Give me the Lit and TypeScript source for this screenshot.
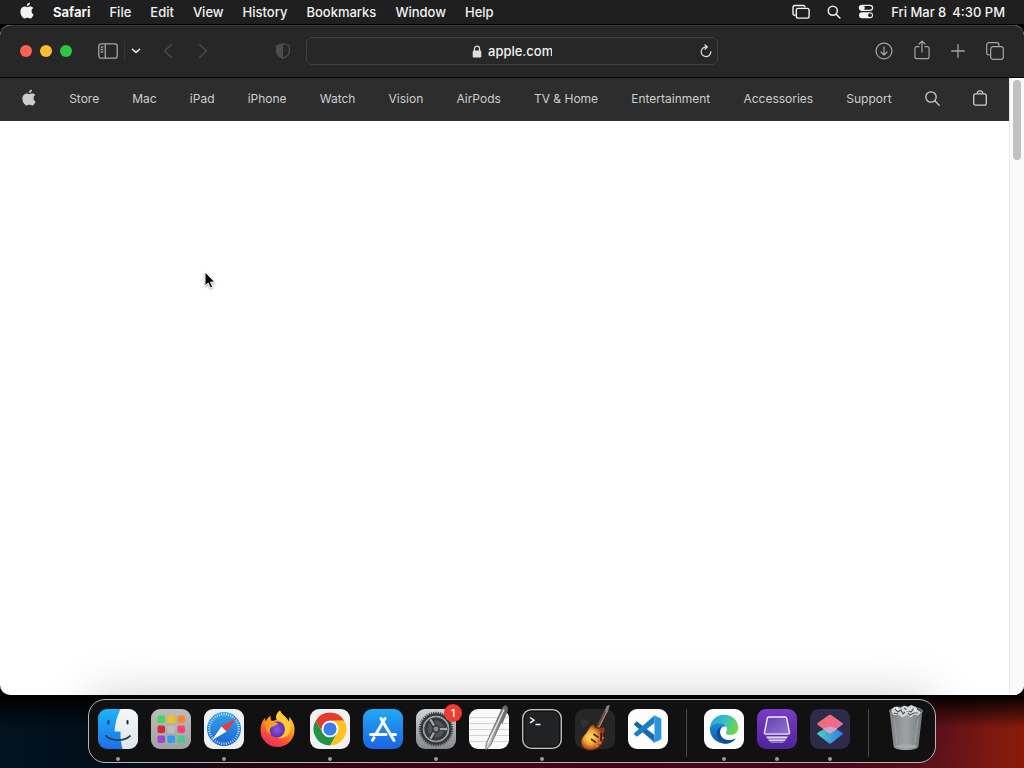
import { LitElement, html, css, svg, nothing, TemplateResult } from "lit";
import { customElement } from "lit/decorators.js";

const appleMark = html`
  <svg class="apple" viewBox="0 0 14 17" width="14" height="17" fill="currentColor" aria-hidden="true">
    <path d="M11.6 9c0-1.6 1.1-2.5 1.7-2.9C12.4 4.8 11.1 4.5 10.2 4.5 9 4.4 8 5.2 7.3 5.2 6.7 5.2 5.7 4.5 4.6 4.5 2.3 4.6.4 6.4.4 9.6c0 3.3 2.4 6.9 4.1 6.9 1 0 1.5-.7 2.8-.7s1.7.7 2.8.7c1.6 0 3-2.6 3.5-4.1C12.3 11.9 11.6 10.7 11.6 9z"/>
    <path d="M9.9.4c.1 1-.3 1.9-.8 2.6-.6.7-1.4 1.1-2.2 1.1-.1-.9.3-1.9.9-2.5C8.3 1 9.2.5 9.9.4z"/>
  </svg>`;

@customElement("menu-bar")
class MenuBar extends LitElement {
  menus = ["File", "Edit", "View", "History", "Bookmarks", "Window", "Help"];

  render() {
    return html`
      <nav class="menus">
        <button class="logo" aria-label="Apple menu">${appleMark}</button>
        <button class="active">Safari</button>
        ${this.menus.map(name => html`<button>${name}</button>`)}
      </nav>
      <div class="status">
        <button aria-label="Stage Manager">
          <svg width="18" height="16" viewBox="0 0 18 16" fill="none" stroke="currentColor" stroke-width="1.4">
            <path d="M3.5 11.3H2.7A1.7 1.7 0 0 1 1 9.6V3.2a1.7 1.7 0 0 1 1.7-1.7h8.6A1.7 1.7 0 0 1 13 3.2"/>
            <rect x="4.3" y="4.4" width="12.8" height="9.7" rx="1.8"/>
          </svg>
        </button>
        <button aria-label="Spotlight">
          <svg width="14" height="14" viewBox="0 0 14 14" fill="none" stroke="currentColor" stroke-width="1.5" stroke-linecap="round">
            <circle cx="5.8" cy="5.8" r="4.5"/><path d="M9.2 9.2l3.7 3.8"/>
          </svg>
        </button>
        <button aria-label="Control Center">
          <svg width="16" height="15" viewBox="0 0 16 15" fill="none" stroke="currentColor" stroke-width="1.3">
            <rect x="1.4" y="1.3" width="13.2" height="5" rx="2.5"/>
            <circle cx="4.1" cy="3.8" r="2" fill="currentColor"/>
            <rect x="1" y="8.2" width="14" height="6" rx="3" fill="currentColor" stroke="none"/>
            <circle cx="12" cy="11.2" r="1.9" fill="#1f1f1f" stroke="none"/>
          </svg>
        </button>
        <time><span>Fri Mar 8</span><span>4:30 PM</span></time>
      </div>
    `;
  }

  static styles = css`
    :host {
      display: flex;
      justify-content: space-between;
      align-items: center;
      height: 24px;
      box-sizing: border-box;
      padding: 0 19px 0 20px;
      background: #1f1f1f;
      color: #f2f2f2;
      font: 500 13px/22px Inter, sans-serif;
      white-space: nowrap;
    }
    .menus {
      display: flex;
      align-items: center;
      gap: 19px;
      padding-bottom: 1px;
    }
    .status {
      display: flex;
      align-items: center;
      gap: 17px;
      padding-bottom: 1px;
    }
    button {
      display: flex;
      align-items: center;
      padding: 0;
      border: 0;
      background: none;
      color: inherit;
      font: inherit;
    }
    .logo {
      padding-bottom: 2px;
    }
    .active {
      font-weight: 700;
    }
    time {
      display: flex;
      gap: 6px;
    }
  `;
}

@customElement("safari-window")
class SafariWindow extends LitElement {
  links = [
    "Store", "Mac", "iPad", "iPhone", "Watch", "Vision", "AirPods",
    "TV & Home", "Entertainment", "Accessories", "Support",
  ];

  renderToolbar() {
    return html`
      <header class="toolbar">
        <div class="side">
          <div class="lights">
            <button class="light close" aria-label="Close"></button>
            <button class="light minimize" aria-label="Minimize"></button>
            <button class="light zoom" aria-label="Zoom"></button>
          </div>
          <div class="sidebar">
            <button aria-label="Sidebar">
              <svg width="20" height="16" viewBox="0 0 20 16" fill="none" stroke="currentColor" stroke-width="1.3">
                <rect x=".8" y=".8" width="18.4" height="14.4" rx="2.2"/>
                <path d="M7.3 1v14M2.8 4h2.4M2.8 6.5h2.4M2.8 9h2.4"/>
              </svg>
            </button>
            <span class="rule"></span>
            <button class="bright" aria-label="Tab groups">
              <svg width="10" height="6" viewBox="0 0 10 6" fill="none" stroke="currentColor" stroke-width="1.7" stroke-linecap="round" stroke-linejoin="round">
                <path d="M1.5 1.3L5 4.4l3.5-3.1"/>
              </svg>
            </button>
          </div>
          <div class="history">
            <button aria-label="Back" disabled>
              <svg width="10" height="16" viewBox="0 0 10 16" fill="none" stroke="currentColor" stroke-width="1.4" stroke-linecap="round" stroke-linejoin="round"><path d="M8.5 1.5L1.5 8l7 6.5"/></svg>
            </button>
            <button aria-label="Forward" disabled>
              <svg width="10" height="16" viewBox="0 0 10 16" fill="none" stroke="currentColor" stroke-width="1.4" stroke-linecap="round" stroke-linejoin="round"><path d="M1.5 1.5l7 6.5-7 6.5"/></svg>
            </button>
          </div>
          <button class="shield" aria-label="Privacy report" disabled>
            <svg width="14" height="16" viewBox="0 0 14 16">
              <path d="M7 .7l5.6 1.7c.4.1.7.5.7.9v5.2c0 3.2-3 5.4-6.3 6.8C3.7 13.9.7 11.7.7 8.5V3.3c0-.4.3-.8.7-.9z" fill="none" stroke="currentColor" stroke-width="1.3"/>
              <path d="M7 .7L1.4 2.4c-.4.1-.7.5-.7.9v5.2c0 3.2 3 5.4 6.3 6.8z" fill="currentColor"/>
            </svg>
          </button>
        </div>
        <div class="address">
          <svg width="10" height="13" viewBox="0 0 10 13" aria-hidden="true">
            <rect x=".7" y="5.5" width="8.6" height="7" rx="1.2" fill="currentColor"/>
            <path d="M2.5 6V3.7a2.5 2.5 0 0 1 5 0V6" fill="none" stroke="currentColor" stroke-width="1.3"/>
          </svg>
          <input type="text" aria-label="Address" value="apple.com" />
          <button class="reload" aria-label="Reload">
            <svg width="12" height="14" viewBox="0 0 12 14" fill="none" stroke="currentColor" stroke-width="1.2" stroke-linecap="round" stroke-linejoin="round">
              <path d="M6.8 3A4.8 4.8 0 1 0 10.8 7.700M5 .8l2.300 2.200L5 5.200"/>
            </svg>
          </button>
        </div>
        <div class="side end">
          <button aria-label="Downloads">
            <svg width="18" height="18" viewBox="0 0 18 18" fill="none" stroke="currentColor" stroke-width="1.2" stroke-linecap="round" stroke-linejoin="round">
              <circle cx="9" cy="9" r="7.9"/><path d="M9 4.8v8M6 10l3 3 3-3"/>
            </svg>
          </button>
          <button class="share" aria-label="Share">
            <svg width="16" height="20" viewBox="0 0 16 20" fill="none" stroke="currentColor" stroke-width="1.2" stroke-linecap="round" stroke-linejoin="round">
              <path d="M5 6.6H2.8A1.9 1.9 0 0 0 .9 8.500v8.200a1.900 1.900 0 0 0 1.900 1.900h10.400a1.900 1.900 0 0 0 1.900-1.900V8.500a1.900 1.900 0 0 0-1.900-1.900H11M8 12V1.300M5 4l3-2.900L11 4"/>
            </svg>
          </button>
          <button aria-label="New tab">
            <svg width="14" height="14" viewBox="0 0 14 14" fill="none" stroke="currentColor" stroke-width="1.3" stroke-linecap="round"><path d="M7 .7v12.6M.7 7h12.6"/></svg>
          </button>
          <button aria-label="Tab overview">
            <svg width="18" height="18" viewBox="0 0 18 18" fill="none" stroke="currentColor" stroke-width="1.2">
              <path d="M4.6 13H2.9A2.2 2.2 0 0 1 .7 10.8V2.9A2.2 2.2 0 0 1 2.9.7h7.9A2.2 2.2 0 0 1 13 2.9v1.7"/>
              <rect x="4.7" y="4.7" width="12.6" height="12.6" rx="2.2"/>
            </svg>
          </button>
        </div>
      </header>
    `;
  }

  render() {
    return html`
      ${this.renderToolbar()}
      <div class="viewport">
        <div class="page">
          <nav>
            <a class="logo" href="#apple" aria-label="Apple">${appleMark}</a>
            ${this.links.map(name => html`<a href="#${name}">${name}</a>`)}
            <a href="#search" aria-label="Search">
              <svg width="15" height="15" viewBox="0 0 15 15" fill="none" stroke="currentColor" stroke-width="1.3" stroke-linecap="round">
                <circle cx="6" cy="6" r="5.2"/><path d="M9.8 9.8l4.4 4.4"/>
              </svg>
            </a>
            <a class="bag" href="#bag" aria-label="Shopping bag">
              <svg width="14" height="16" viewBox="0 0 14 16" fill="none" stroke="currentColor" stroke-width="1.3">
                <rect x=".7" y="3.8" width="12.6" height="11.4" rx="1.9"/>
                <path d="M4.2 3.8C4.2 1.9 5.4.8 7 .8s2.8 1.1 2.8 3"/>
              </svg>
            </a>
          </nav>
        </div>
        <div class="scrollbar"><div class="thumb"></div></div>
      </div>
    `;
  }

  static styles = css`
    :host {
      display: flex;
      flex-direction: column;
      overflow: hidden;
      border-radius: 10px;
      background: #fff;
      font-family: Inter, sans-serif;
    }
    button {
      display: flex;
      padding: 0;
      border: 0;
      background: none;
      color: inherit;
    }
    button:disabled {
      color: #4c4c4c;
    }
    .toolbar {
      display: grid;
      grid-template-columns: 1fr minmax(160px, 412px) 1fr;
      align-items: center;
      height: 53px;
      box-sizing: border-box;
      padding: 0 20px 1px;
      border-top: 1px solid #3d3d3d;
      border-bottom: 1px solid #000;
      border-radius: 10px 10px 0 0;
      background: #272727;
      color: #a5a5a5;
    }
    .side {
      display: flex;
      align-items: center;
    }
    .end {
      justify-content: flex-end;
      gap: 21px;
    }
    .share {
      padding-bottom: 2px;
    }
    .lights {
      display: flex;
      gap: 8px;
    }
    .light {
      width: 12px;
      height: 12px;
      border-radius: 50%;
    }
    .close {
      background: #ff5f57;
    }
    .minimize {
      background: #febc2e;
    }
    .zoom {
      background: #28c840;
    }
    .sidebar {
      display: flex;
      align-items: center;
      gap: 6px;
      margin-left: 26px;
    }
    .rule {
      width: 1px;
      height: 20px;
      background: #363636;
    }
    .bright {
      color: #dcdcdc;
    }
    .history {
      display: flex;
      gap: 25px;
      margin-left: 22px;
    }
    .shield {
      margin: 0 16px 0 auto;
    }
    .address {
      display: grid;
      grid-template-columns: 1fr auto auto 1fr;
      align-items: center;
      gap: 6px;
      height: 28px;
      box-sizing: border-box;
      padding: 0 5px;
      border: 1px solid #3f3f3f;
      border-radius: 6px;
      color: #dedede;
    }
    .address > svg {
      grid-column: 2;
    }
    input {
      width: 64px;
      padding: 0;
      border: 0;
      outline: 0;
      background: none;
      color: #f2f2f2;
      font: 500 13px/20px Inter, sans-serif;
    }
    .reload {
      justify-self: end;
    }
    .viewport {
      flex: 1;
      display: flex;
    }
    .page {
      flex: 1;
      min-width: 0;
    }
    nav {
      display: flex;
      justify-content: space-between;
      align-items: center;
      height: 43px;
      box-sizing: border-box;
      padding: 0 22px 2px;
      background: #2d2d2d;
    }
    a {
      display: flex;
      color: #cdcdcd;
      font-size: 12px;
      line-height: 20px;
      text-decoration: none;
      white-space: nowrap;
    }
    .logo,
    .bag {
      padding-bottom: 2px;
    }
    .scrollbar {
      width: 15px;
      box-sizing: border-box;
      padding: 2px 3px;
      border-left: 1px solid #e8e8e8;
      background: #fafafa;
    }
    .thumb {
      height: 80px;
      border-radius: 4px;
      background: #c1c1c1;
    }
  `;
}

const ticks = (count: number, from: number, to: number, stroke: string, width: number) =>
  Array.from({ length: count }, (_, i) => {
    const a = (i * 2 * Math.PI) / count;
    const [c, s] = [Math.cos(a), Math.sin(a)];
    return svg`<line x1=${20 + c * from} y1=${20 + s * from} x2=${20 + c * to} y2=${20 + s * to} stroke=${stroke} stroke-width=${width}/>`;
  });

const finder = svg`
  <defs>
    <linearGradient id="fl" x2="0" y2="1"><stop stop-color="#1bb5f8"/><stop offset="1" stop-color="#1f6fe8"/></linearGradient>
    <linearGradient id="fr" x2="0" y2="1"><stop stop-color="#f6f7f8"/><stop offset="1" stop-color="#dfe5ec"/></linearGradient>
    <clipPath id="fc"><rect width="40" height="40" rx="9"/></clipPath>
  </defs>
  <g clip-path="url(#fc)">
    <rect width="40" height="40" fill="url(#fl)"/>
    <path d="M22.5 0C19 7 17 15 16.5 22.5h6c-.2 6 .5 12 2 17.5H40V0z" fill="url(#fr)"/>
  </g>
  <g fill="none" stroke-linecap="round">
    <path d="M10.5 12v2.5" stroke="#173e66" stroke-width="2"/>
    <path d="M29.5 12v2.5" stroke="#252a30" stroke-width="2"/>
    <path d="M8 27c6 5.500 18 5.500 24 0" stroke="#23425c" stroke-width="1.7"/>
  </g>`;

const padColors = ["#4bd35a", "#fbbd19", "#f8862d", "#d92a35", "#bdbdb8", "#f74471", "#9d46cf", "#2a9df4", "#45cd91"];
const launchpad = svg`
  <defs><linearGradient id="lp" x2="0" y2="1"><stop stop-color="#bcbcbc"/><stop offset="1" stop-color="#a2a2a2"/></linearGradient></defs>
  <rect width="40" height="40" rx="9" fill="url(#lp)"/>
  ${padColors.map((fill, i) => svg`<rect x=${6.5 + (i % 3) * 10} y=${6.5 + Math.floor(i / 3) * 10} width="7.5" height="7.5" rx="1.8" fill=${fill}/>`)}`;

const safari = svg`
  <defs><linearGradient id="sf" x2="0" y2="1"><stop stop-color="#35a8ea"/><stop offset="1" stop-color="#1b62d6"/></linearGradient></defs>
  <rect width="40" height="40" rx="9" fill="#eef0f2"/>
  <circle cx="20" cy="20" r="17" fill="url(#sf)"/>
  ${ticks(40, 13.5, 16, "#e6f2fc", 0.8)}
  <path d="M33 8.500L17.500 17.500l5 5z" fill="#ec3b3c"/>
  <path d="M7.500 31.500l10-14 5 5z" fill="#f6f6f6"/>`;

const firefox = svg`
  <defs>
    <linearGradient id="fx" x1=".8" y1="0" x2=".3" y2="1"><stop stop-color="#ffe14a"/><stop offset=".4" stop-color="#ff9b20"/><stop offset=".75" stop-color="#fb4b38"/><stop offset="1" stop-color="#e42c66"/></linearGradient>
    <radialGradient id="fp"><stop stop-color="#8e55e5"/><stop offset="1" stop-color="#5b2db5"/></radialGradient>
  </defs>
  <path d="M23 1.500c1 3 4 4.500 6.500 7.500 1 1 1.700 2.400 2.200 3.700.6-1.400.8-3.200.3-5 4 4 6 9 5.500 14.500-.7 9-8 15.800-17 15.800-9.500 0-17-7.500-17-17 0-5 1.800-9.500 4.600-12.300 0 1.400.2 2.600.8 3.700 1-2.700 2.600-4.600 4.700-5.700-.3 2.100.1 3.800 1 5 2 .2 3.400-.3 5-1.200C18.500 7.600 19.700 3.700 23 1.500z" fill="url(#fx)"/>
  <circle cx="20" cy="20.500" r="8" fill="url(#fp)"/>
  <path d="M8.500 12.500c4-1.500 8.500-1 12.500 2.200-1.500 2.300-5.500 2-7.500 4.300-1.200 1.600-1 4.200.7 6.200-4.500-1.500-6.700-6.700-5.700-12.700z" fill="#ff9a24"/>
  <path d="M23 1.500c-3.300 2.200-4.500 6-3 9 4 1 7.500 3.500 8 8 .6 5-2 9.500-7.500 10.500 8 1 13.500-4 13.500-11 0-7.500-9.500-9.500-11-16.500z" fill="#ffcb36"/>`;

const chrome = svg`
  <rect width="40" height="40" rx="9" fill="#f1f1f1"/>
  <g transform="translate(20 20)">
    <circle r="17" fill="#fff"/>
    <path d="M-14.300-8.300A16.500 16.500 0 0 1 14.300-8.300H0A8.300 8.300 0 0 0-7.200-4.100z" fill="#e33b2e"/>
    <path d="M-14.300-8.300L-7.200 4.100A8.300 8.300 0 0 1 0-8.300z" fill="#e33b2e"/>
    <path d="M14.300-8.300A16.500 16.500 0 0 1 0 16.500L7.200 4.100A8.300 8.300 0 0 0 0-8.300z" fill="#fcc31e"/>
    <path d="M0 16.500A16.500 16.500 0 0 1-14.300-8.300L-7.200 4.100A8.300 8.300 0 0 0 7.200 4.100z" fill="#229342"/>
    <circle r="8.3" fill="#fff"/><circle r="6.6" fill="#3b7de9"/>
  </g>`;

const appStore = svg`
  <defs><linearGradient id="as" x2="0" y2="1"><stop stop-color="#22a9f5"/><stop offset="1" stop-color="#1b63e6"/></linearGradient></defs>
  <rect width="40" height="40" rx="9" fill="url(#as)"/>
  <g fill="none" stroke="#f5faff" stroke-width="3" stroke-linecap="round">
    <path d="M22 9.500L13 25M18 9.500l13 22M7.500 25.500h15.500M28 25.500h4.500M11 28.700L9.500 31.200"/>
  </g>`;

const settings = svg`
  <defs><linearGradient id="st" x2="0" y2="1"><stop stop-color="#d0d3d5"/><stop offset="1" stop-color="#85888c"/></linearGradient></defs>
  <rect width="40" height="40" rx="9" fill="url(#st)"/>
  ${ticks(44, 15, 17.3, "#3c4044", 1.2)}
  <g fill="none" stroke="#34383c">
    <circle cx="20" cy="20" r="14.5" stroke-width="2.5"/>
    <circle cx="20" cy="20" r="10.3" stroke-width="3.4" fill="#4e5357"/>
    <circle cx="20" cy="20" r="12.4" stroke="#9b9fa2" stroke-width="1.4"/>
    <path d="M20 20L15 11.500M20 20h10M20 20l-5 8.500" stroke="#25282b" stroke-width="4"/>
    <path d="M20 20L14.500 10.500M20 20h11M20 20l-5.500 9.500" stroke="#a5a9ac" stroke-width="2.4"/>
    <circle cx="20" cy="20" r="3.2" fill="#85898d" stroke-width="1.5"/>
  </g>`;

const textEdit = svg`
  <defs><linearGradient id="te" x2="1"><stop stop-color="#d8d8d8"/><stop offset=".5" stop-color="#8e8e8e"/><stop offset="1" stop-color="#606060"/></linearGradient></defs>
  <rect width="40" height="40" rx="9" fill="#f9f9f9"/>
  <path d="M1 8.500h38M0 14.500h40M0 20.500h40M0 26.500h40M1 32.500h38" stroke="#c9c9c9" stroke-width=".8"/>
  <path d="M36-3.500c1.800.2 2.800 1.200 2.800 2.600L21.500 36.500 16.500 41l.7-6.700L34-2.300z" fill="url(#te)" stroke="#555" stroke-width=".7"/>
  <path d="M35 .5L19 34.500" stroke="#f2f2f2" stroke-width="1.2"/>
  <path d="M38.500 1l-5.500 13" stroke="#696969" stroke-width="1.3" stroke-linecap="round"/>`;

const terminal = svg`
  <rect x=".8" y=".8" width="38.4" height="38.4" rx="8.5" fill="#202224" stroke="#bfc1c2" stroke-width="1.5"/>
  <rect x="2.2" y="2.2" width="35.6" height="35.6" rx="7" fill="none" stroke="#0a0a0a" stroke-width="1"/>
  <path d="M8 8.500l4 2.700-4 2.700M13.500 15.500h5" fill="none" stroke="#f0f0f0" stroke-width="1.5"/>`;

const garageBand = svg`
  <defs><radialGradient id="gb" cx=".4" cy=".5"><stop stop-color="#ffe566"/><stop offset=".55" stop-color="#f3a233"/><stop offset="1" stop-color="#99371a"/></radialGradient></defs>
  <rect width="40" height="40" rx="9" fill="#262626"/>
  <path d="M5 12l6-2 4 4-7 5z" fill="#333"/>
  <path d="M20 24L30.500 2.500" stroke="#6d4c36" stroke-width="3"/>
  <path d="M21.500 23L32 2.500" stroke="#c8ad8c" stroke-width=".9"/>
  <path d="M29.500 3l2-6 3.500-1-2.500 7.500z" fill="#8a847e"/>
  <path d="M13.500 20c1-3.500 4-5 6.500-4.500-.8 2 .3 4.200 3.300 3.500 3-.8 6.200-1.800 6.700.9.4 2.600-2.400 4.200-1.500 7.600 1 5-2 10.500-8.500 13-6.500 2.300-13.500-.3-14-6.800-.4-5.700 5.500-8.700 7.500-13.700z" fill="url(#gb)" stroke="#482013" stroke-width=".8"/>
  <path d="M18.500 25l5 3.500M16 30l5 3.500" stroke="#47281c" stroke-width="1.6"/>
  <path d="M26.500 24c-1 3 .5 5-1 8" stroke="#3d160c" stroke-width="1.8" fill="none"/>
  <path d="M25 34h.1M22 37h.1M28 29h.1" stroke="#f5d898" stroke-width="1.3" stroke-linecap="round"/>`;

const vsCode = svg`
  <rect width="40" height="40" rx="9" fill="#fdfdfd"/>
  <path d="M26.500 6.500v27L6.300 16c-.5-.5-.5-1 0-1.500l1.800-1.600c.4-.4 1-.4 1.500 0L26.500 26z" fill="#1769aa"/>
  <path d="M26.500 33.500V27L26.500 14 9.600 27.200c-.5.4-1 .4-1.500 0l-1.800-1.700c-.5-.4-.5-1 0-1.400L26.500 6.500z" fill="#197ec5"/>
  <path d="M26.500 6.500l6 2.700c.5.300.8.700.8 1.300v19c0 .6-.3 1-.8 1.300l-6 2.700c-.8.300-1.600 0-2-.5 1 .6 2-.1 2-1V8c0-.9-1-1.600-2-1 .4-.5 1.200-.8 2-.5z" fill="#2796dd"/>`;

const edge = svg`
  <defs>
    <linearGradient id="e1" x2="1" y2=".4"><stop stop-color="#2aa4df"/><stop offset=".55" stop-color="#35bfc6"/><stop offset="1" stop-color="#6bd64a"/></linearGradient>
    <linearGradient id="e2" x2="0" y2="1"><stop stop-color="#1d8ad9"/><stop offset="1" stop-color="#1459ad"/></linearGradient>
  </defs>
  <rect width="40" height="40" rx="9" fill="#fdfdfd"/>
  <path d="M6 18.500C7 10.500 13 5.800 20 5.800c8.500 0 14.200 6 14.200 12.700 0 4.500-3.200 7.500-7.500 7.500-3.200 0-5-1-5-2 0-.8 1.300-1.300 1.300-4 0-3-2.700-5.300-6.500-5.300C12 14.700 8 16.500 6 18.500z" fill="url(#e1)"/>
  <path d="M6 18.500c2-2.800 5.500-4.300 9.500-4.300 3.500 0 6 1.500 7 3.800-2-1.300-6.500 0-6.500 5.200 0 5 4.500 8 9 8 3 0 5-.8 6.800-2-2.500 3.700-6.500 5.500-11 5.500C12 34.700 5 27 6 18.500z" fill="url(#e2)"/>
  <path d="M18 17.500c-5 1.500-6.500 6.500-4.500 11 1.500 3.500 4.500 5.800 7.500 6 4.500-.1 8.500-2 10.800-5.300-1.800 1.200-3.800 2-6.800 2-4.500 0-9-3-9-8 0-2.500.8-4.500 2-5.700z" fill="#124b96"/>`;

const virtualMachine = svg`
  <defs>
    <linearGradient id="pd" x2="0" y2="1"><stop stop-color="#7a3cc8"/><stop offset="1" stop-color="#4d249a"/></linearGradient>
    <linearGradient id="pf" x2="1" y2="1"><stop stop-color="#653db1"/><stop offset="1" stop-color="#9476cf"/></linearGradient>
  </defs>
  <rect width="40" height="40" rx="9" fill="url(#pd)"/>
  <path d="M12 8h16c.9 0 1.500.5 1.700 1.300l2.800 14c.2 1-.4 1.800-1.500 1.800H9c-1.100 0-1.700-.8-1.500-1.800l2.800-14C10.500 8.500 11.100 8 12 8z" fill="url(#pf)" stroke="#f4eefc" stroke-width="1.4"/>
  <path d="M9.500 27.700h21l-1 1.600h-19zM11.500 30.700h17l-1 1.300h-15zM13.500 33.300h13" fill="#e2d6f5" stroke="#e2d6f5" stroke-width=".6"/>`;

const shortcuts = svg`
  <defs>
    <linearGradient id="s1" x2="1" y2="1"><stop stop-color="#f46b62"/><stop offset="1" stop-color="#ef6cae"/></linearGradient>
    <linearGradient id="s2" x2="1"><stop stop-color="#4dcfbd"/><stop offset="1" stop-color="#2f78ef"/></linearGradient>
  </defs>
  <rect width="40" height="40" rx="9" fill="#2c2c4a"/>
  <path d="M20 16.500l12 7c1 .7 1 1.500 0 2.200l-10.500 8.200c-1 .7-2 .7-3 0L8 25.700c-1-.7-1-1.500 0-2.200z" fill="url(#s2)"/>
  <path d="M21.500 6.200L32 13.700c1 .7 1 1.600 0 2.300l-10.500 8c-1 .7-2 .7-3 0L8 16c-1-.7-1-1.600 0-2.300l10.500-7.500c1-.7 2-.7 3 0z" fill="url(#s1)"/>
  <path d="M20 17.500l7.500 2-6 4.500c-1 .7-2 .7-3 0l-6-4.500z" fill="#c9a4ca"/>`;

const trash = svg`
  <defs><linearGradient id="tr" x2="1"><stop stop-color="#7c8185"/><stop offset=".5" stop-color="#9fa3a6"/><stop offset="1" stop-color="#73787c"/></linearGradient></defs>
  <path d="M3.500 1.500L7.500 37c.2 2.400 3.500 4 12.500 4s12.300-1.600 12.500-4L36.500 1.500c-5 3-28 3-33 0z" fill="url(#tr)"/>
  <path d="M8 10l3 24M32 10l-3 24" stroke="#a4a8ab" stroke-width=".8"/>
  <ellipse cx="20" cy="37.3" rx="10.5" ry="2" fill="#a6aaad"/>
  <ellipse cx="20" cy="2" rx="16.5" ry="4" fill="#44474a" stroke="#a7abad" stroke-width=".8"/>
  <path d="M5 2l3-4 4-.5 2 2 4-3 4 1.500 3-2 5 2 1.500 3L35 3l-3 3.500-4-1-3 3-4-3-5 3-3-3-5 .5z" fill="#d8dada"/>
  <path d="M9 0l3 3 3-2 2 4 4-4 4 2 3-4M8 4l4 1M22 4l2 2 4-2 4 0M18-1l3 2" fill="none" stroke="#53575a" stroke-width="1.2"/>
  <path d="M10-1l2 2M19 3l2-2 2 1M28-1l2 3" stroke="#fff" stroke-width="1.3"/>`;

interface DockApp {
  name: string;
  icon: TemplateResult | ReturnType<typeof svg>;
  running?: boolean;
  badge?: number;
}

@customElement("app-dock")
class AppDock extends LitElement {
  groups: DockApp[][] = [
    [
      { name: "Finder", icon: finder, running: true },
      { name: "Launchpad", icon: launchpad },
      { name: "Safari", icon: safari, running: true },
      { name: "Firefox", icon: firefox },
      { name: "Chrome", icon: chrome, running: true },
      { name: "App Store", icon: appStore },
      { name: "System Settings", icon: settings, running: true, badge: 1 },
      { name: "TextEdit", icon: textEdit },
      { name: "Terminal", icon: terminal, running: true },
      { name: "GarageBand", icon: garageBand },
      { name: "Visual Studio Code", icon: vsCode },
    ],
    [
      { name: "Edge", icon: edge, running: true },
      { name: "Virtual Machine", icon: virtualMachine, running: true },
      { name: "Shortcuts", icon: shortcuts, running: true },
    ],
    [{ name: "Trash", icon: trash }],
  ];

  render() {
    return html`
      ${this.groups.map((apps, i) => html`
        ${i ? html`<span class="rule"></span>` : nothing}
        ${apps.map(app => html`
          <button aria-label=${app.name}>
            <svg viewBox="0 0 40 40" width="40" height="40">${app.icon}</svg>
            ${app.badge ? html`<span class="badge">${app.badge}</span>` : nothing}
            ${app.running ? html`<span class="dot"></span>` : nothing}
          </button>
        `)}
      `)}
    `;
  }

  static styles = css`
    :host {
      display: flex;
      gap: 13px;
      height: 64px;
      box-sizing: border-box;
      padding: 9px 9px 0;
      border: 1px solid #b9b5b5;
      border-radius: 17px;
      background: #111;
      box-shadow: 0 0 50px rgba(0, 0, 0, 0.22);
    }
    button {
      position: relative;
      display: flex;
      flex-direction: column;
      align-items: center;
      gap: 8px;
      padding: 0;
      border: 0;
      background: none;
    }
    svg {
      display: block;
      overflow: visible;
    }
    .rule {
      width: 1px;
      height: 48px;
      margin: 0 4px 0 5px;
      background: #484848;
    }
    .dot {
      width: 4px;
      height: 4px;
      border-radius: 50%;
      background: #999;
    }
    .badge {
      position: absolute;
      top: -5px;
      right: -6px;
      width: 18px;
      height: 18px;
      border-radius: 50%;
      background: #f23b30;
      color: #fff;
      font: 500 11px/18px Inter, sans-serif;
      text-align: center;
    }
  `;
}

@customElement("app-root")
class AppRoot extends LitElement {
  render() {
    return html`
      <menu-bar></menu-bar>
      <safari-window></safari-window>
      <app-dock></app-dock>
      <svg class="pointer" width="13" height="19" viewBox="0 0 13 19" aria-hidden="true">
        <path d="M1 1v14l3.200-3 2.200 5 2.300-1-2.200-4.900h4.300z" fill="#000" stroke="#fff" stroke-width="1"/>
      </svg>
    `;
  }

  static styles = css`
    :host {
      position: relative;
      display: flex;
      flex-direction: column;
      min-height: 100vh;
      overflow: hidden;
      background:
        linear-gradient(#000 0, #000 calc(100% - 73px), rgba(0, 0, 0, 0) calc(100% - 40px)),
        linear-gradient(90deg, #02121f 0, #02101c 12%, #2a0714 25%, #4a0420 45%, #4b0720 80%, #64141c 92%, #8a1c0a 100%);
    }
    safari-window {
      flex: 1;
      margin-top: 1px;
    }
    app-dock {
      align-self: center;
      margin: 4px 0 5px;
      z-index: 1;
    }
    .pointer {
      position: absolute;
      left: 204px;
      top: 271px;
      filter: drop-shadow(0 1px 1px rgba(0, 0, 0, 0.35));
    }
  `;
}
